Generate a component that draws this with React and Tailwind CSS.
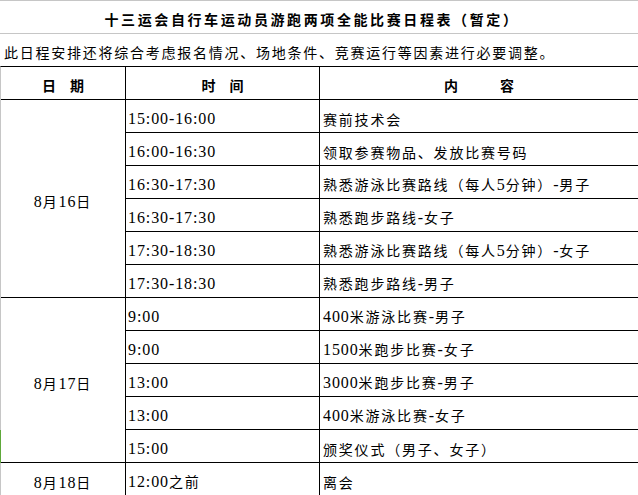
import React from "react";

const schedule = [
  {
    date: "8月16日",
    span: "row-span-6",
    items: [
      ["15:00-16:00", "赛前技术会"],
      ["16:00-16:30", "领取参赛物品、发放比赛号码"],
      ["16:30-17:30", "熟悉游泳比赛路线（每人5分钟）-男子"],
      ["16:30-17:30", "熟悉跑步路线-女子"],
      ["17:30-18:30", "熟悉游泳比赛路线（每人5分钟）-女子"],
      ["17:30-18:30", "熟悉跑步路线-男子"],
    ],
  },
  {
    date: "8月17日",
    span: "row-span-5",
    items: [
      ["9:00", "400米游泳比赛-男子"],
      ["9:00", "1500米跑步比赛-女子"],
      ["13:00", "3000米跑步比赛-男子"],
      ["13:00", "400米游泳比赛-女子"],
      ["15:00", "颁奖仪式（男子、女子）"],
    ],
  },
  {
    date: "8月18日",
    span: "row-span-1",
    items: [["12:00之前", "离会"]],
  },
];

// digits in a serif face, CJK in Noto -- like the sheet's SimSun
const Mixed = ({ text }) =>
  text.split(/([0-9:\-]+)/).map((part, i) =>
    /^[0-9:\-]+$/.test(part) ? (
      <span key={i} className="font-['Liberation_Serif',serif] text-[16px] tracking-[0.9px]">
        {part}
      </span>
    ) : (
      <span key={i} className="text-[14px] tracking-[1.8px]">
        {part}
      </span>
    )
  );

export default function App() {
  return (
    <div className="w-[638px] h-[495px] overflow-hidden bg-white text-black font-['Noto_Sans_CJK_SC',sans-serif]">
      {/* title */}
      <div className="h-[34px] border-y border-[#c6c6c6] flex items-center justify-center pt-[4px] pr-[14px]">
        <span className="text-[14px] font-bold tracking-[2.6px]">
          十三运会自行车运动员游跑两项全能比赛日程表（暂定）
        </span>
      </div>

      {/* note */}
      <div className="h-[32px] flex items-center pl-[4px] pt-[5px]">
        <span className="text-[14px] tracking-[1.75px]">
          此日程安排还将综合考虑报名情况、场地条件、竞赛运行等因素进行必要调整。
        </span>
      </div>

      {/* table */}
      <div className="relative border-t border-black border-l border-l-[#c6c6c6] grid grid-cols-[125px_194px_1fr] auto-rows-[33px]">
        <div className="border-b border-r border-black flex items-center justify-center pt-[4px] text-[14px] font-bold">
          日　期
        </div>
        <div className="border-b border-r border-black flex items-center justify-center pt-[4px] text-[14px] font-bold">
          时　间
        </div>
        <div className="border-b border-black flex items-center justify-center pt-[4px] text-[14px] font-bold">
          内　　　容
        </div>

        {schedule.map((day) =>
          day.items.map(([time, what], i) => (
            <React.Fragment key={day.date + i}>
              {i === 0 && (
                <div className={`${day.span} border-b border-r border-black flex items-center justify-center pt-[5px]`}>
                  <span className="whitespace-nowrap">
                    <Mixed text={day.date} />
                  </span>
                </div>
              )}
              <div className="border-b border-r border-black flex items-center pl-[2px] pt-[4px] whitespace-nowrap">
                <span>
                  <Mixed text={time} />
                </span>
              </div>
              <div className="border-b border-black flex items-center pl-[3px] pt-[4px] whitespace-nowrap">
                <span>
                  <Mixed text={what} />
                </span>
              </div>
            </React.Fragment>
          ))
        )}

        {/* selected-row marker on the sheet edge */}
        <div className="absolute left-[-1px] top-[363px] w-[1px] h-[33px] bg-[#5ea83a]" />
      </div>
    </div>
  );
}
